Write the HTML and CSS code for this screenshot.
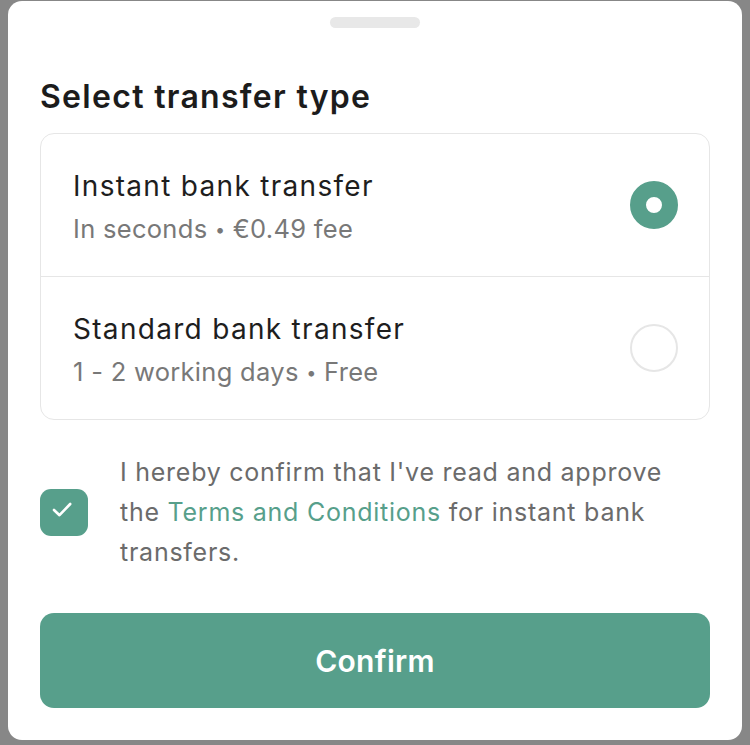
FILE: index.html
```html
<!DOCTYPE html>
<html>
<head>
<meta charset="utf-8">
<link rel="stylesheet" href="styles.css">
</head>
<body>
<div class="sheet">
  <div class="handle"></div>
  <h1 class="title">Select transfer type</h1>
  <div class="options">
    <div class="option">
      <div class="option-text">
        <div class="option-name">Instant bank transfer</div>
        <div class="option-sub">In seconds <span class="dot">•</span> €0.49 fee</div>
      </div>
      <div class="radio radio-on"></div>
    </div>
    <div class="option option-last">
      <div class="option-text">
        <div class="option-name">Standard bank transfer</div>
        <div class="option-sub">1 - 2 working days <span class="dot">•</span> Free</div>
      </div>
      <div class="radio"></div>
    </div>
  </div>
  <div class="consent">
    <div class="checkbox">
      <svg class="check" width="24" height="24" viewBox="0 0 24 24"><path d="M3 11 L8.5 16.2 L19.2 5" fill="none" stroke="#fff" stroke-width="2.6" stroke-linecap="round" stroke-linejoin="round"/></svg>
    </div>
    <p class="consent-text">I hereby confirm that I've read and approve the <span class="link">Terms and Conditions</span> for instant bank transfers.</p>
  </div>
  <button class="confirm">Confirm</button>
</div>
</body>
</html>
```
FILE: styles.css
```css
html, body {
  margin: 0;
  padding: 0;
  background: #878787;
  height: 745px;
  overflow: hidden;
}
body {
  padding: 1px 8px 0 8px;
  font-family: "Inter", "Liberation Sans", sans-serif;
}
.sheet {
  background: #fff;
  border-radius: 14px;
  height: 739px;
  box-sizing: border-box;
  padding: 16px 32px 0 32px;
  display: flex;
  flex-direction: column;
}
.handle {
  align-self: center;
  width: 90px;
  height: 11px;
  border-radius: 6px;
  background: #e8e8e8;
}
.title {
  margin: 49px 0 0 0;
  font-size: 32px;
  line-height: 40px;
  font-weight: 600;
  color: #1c1c1c;
  letter-spacing: 1.3px;
}
.options {
  margin-top: 16px;
  border: 1px solid #e6e6e6;
  border-radius: 14px;
}
.option {
  display: flex;
  align-items: center;
  justify-content: space-between;
  height: 142px;
  padding: 0 31px 0 32px;
  border-bottom: 1px solid #e6e6e6;
}
.option-last {
  border-bottom: none;
}
.option-text {
  padding-top: 3px;
}
.option-name {
  font-size: 28px;
  line-height: 40px;
  color: #1e1e1e;
  letter-spacing: 1.3px;
}
.option-sub {
  font-size: 25.5px;
  line-height: 36px;
  color: #787878;
  margin-top: 5px;
  letter-spacing: 0.3px;
}
.dot {
  font-size: 18px;
  vertical-align: 2px;
}
.radio {
  width: 44px;
  height: 44px;
  border-radius: 50%;
  border: 2px solid #e6e6e6;
}
.radio-on {
  border: 16px solid #579f8b;
  width: 16px;
  height: 16px;
  background: #fff;
}
.consent {
  display: flex;
  align-items: center;
  margin-top: 32px;
}
.checkbox {
  width: 48px;
  height: 47px;
  border-radius: 11px;
  background: #579f8b;
  display: flex;
  align-items: center;
  justify-content: center;
  flex-shrink: 0;
}
.check {
  margin: -2px 0 0 -2px;
}
.consent-text {
  margin: 0 0 0 32px;
  max-width: 565px;
  font-size: 25px;
  line-height: 40px;
  color: #6b6b6b;
  letter-spacing: 0.75px;
}
.link {
  color: #579f8b;
}
.confirm {
  margin-top: 41px;
  height: 95px;
  border: none;
  border-radius: 14px;
  background: #579f8b;
  color: #fff;
  font-family: "Inter", "Liberation Sans", sans-serif;
  font-size: 30px;
  font-weight: 600;
  letter-spacing: 0.3px;
  padding: 0;
}
```
